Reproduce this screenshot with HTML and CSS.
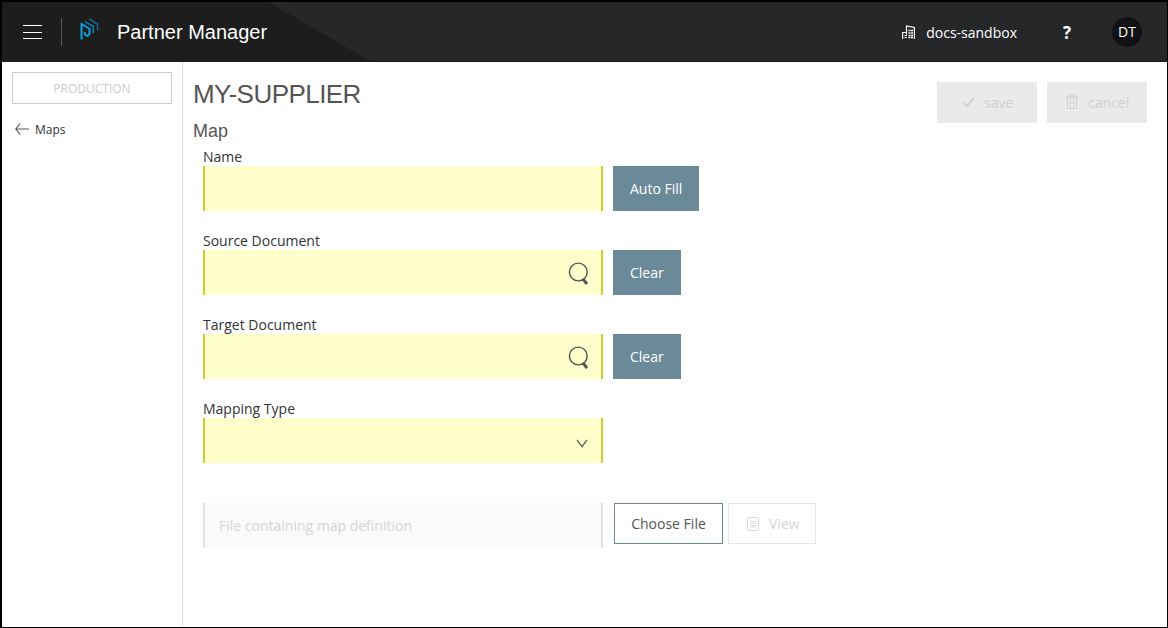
FILE: index.html
```html
<!DOCTYPE html>
<html lang="en">
<head>
<meta charset="utf-8">
<title>Partner Manager</title>
<link rel="stylesheet" href="styles.css">
</head>
<body>
<div class="app">
  <header class="topbar">
    <svg class="topbar-bg" width="370" height="60" viewBox="0 0 370 60"><path d="M0 0H266L370 60H0Z" fill="#1c1d1c"/></svg>
    <button class="menu" aria-label="Menu"><i></i><i></i><i></i></button>
    <span class="divider"></span>
    <svg class="logo" width="20" height="22" viewBox="0 0 20 22" fill="none">
      <path d="M1.500 21.500V6L9.500 10.700V15.800L7.500 18L4.800 16.300V14" stroke="#0a9fe0" stroke-width="2"/>
      <path d="M5 3.700L13.300 8.500V15" stroke="#0b7fae" stroke-width="1.500"/>
      <path d="M9 1L17.500 6V12.500" stroke="#0b6a92" stroke-width="1.500"/>
    </svg>
    <span class="app-name">Partner Manager</span>
    <div class="account">
      <svg width="13" height="15" viewBox="0 0 13 15" fill="none" stroke="#fff">
        <path d="M.6 14V7.500H4.500M4.500 9.500V1L12.400 2.500V14M2.500 10.500H5M2.500 12.500H5" stroke-width="1.200"/>
        <path d="M6.500 5.500H11M6.500 8H11M6.500 10.500H11M6.500 12.500H11" stroke-width="1.300" stroke-dasharray="2 .6"/>
      </svg>
      <span>docs-sandbox</span>
    </div>
    <span class="help">?</span>
    <span class="avatar">DT</span>
  </header>
  <div class="body">
    <nav class="sidebar">
      <div class="env">PRODUCTION</div>
      <a class="back">
        <svg width="14" height="12" viewBox="0 0 14 12" fill="none" stroke="#555" stroke-width="1.100"><path d="M.8 6H14M5 .7L.8 6L5 11.300"/></svg>
        <span>Maps</span>
      </a>
    </nav>
    <main class="content">
      <div class="heading">
        <div>
          <h1>MY-SUPPLIER</h1>
          <h2>Map</h2>
        </div>
        <div class="actions">
          <button class="action save">
            <svg width="12" height="11" viewBox="0 0 12 11" fill="none" stroke="#d0d1d2" stroke-width="2"><path d="M1 6L4.200 9L10 1.500"/></svg>
            <span>save</span>
          </button>
          <button class="action cancel">
            <svg width="12" height="15" viewBox="0 0 12 15" fill="none" stroke="#d0d1d2"><path d="M4 1.500V.5H8V1.500M.5 1.500H11.500V3.500H.5ZM1.500 3.500V13.500H10.500V3.500M4.500 5.500V11.500M7.500 5.500V11.500"/></svg>
            <span>cancel</span>
          </button>
        </div>
      </div>
      <form class="form">
        <div class="group">
          <label>Name</label>
          <div class="row"><div class="field"></div><button type="button" class="btn">Auto Fill</button></div>
        </div>
        <div class="group">
          <label>Source Document</label>
          <div class="row">
            <div class="field"><svg class="search" width="21" height="24" viewBox="0 0 21 24" fill="none" stroke="#555"><circle cx="10.300" cy="10" r="8.900" stroke-width="1.400"/><path d="M15 17L19 22" stroke-width="3"/></svg></div>
            <button type="button" class="btn">Clear</button>
          </div>
        </div>
        <div class="group">
          <label>Target Document</label>
          <div class="row">
            <div class="field"><svg class="search" width="21" height="24" viewBox="0 0 21 24" fill="none" stroke="#555"><circle cx="10.300" cy="10" r="8.900" stroke-width="1.400"/><path d="M15 17L19 22" stroke-width="3"/></svg></div>
            <button type="button" class="btn">Clear</button>
          </div>
        </div>
        <div class="group">
          <label>Mapping Type</label>
          <div class="row">
            <div class="field"><svg class="chevron" width="12" height="9" viewBox="0 0 12 9" fill="none" stroke="#555" stroke-width="1.200"><path d="M1 .8L6 7.700L11 .8"/></svg></div>
          </div>
        </div>
        <div class="row file-row">
          <div class="field disabled">File containing map definition</div>
          <button type="button" class="outline choose">Choose File</button>
          <button type="button" class="outline view">
            <svg width="12" height="14" viewBox="0 0 12 14" fill="none" stroke="#dcdcdc"><path d="M.5 .5H11.500V13.500H.5Z"/><path d="M3 4.500H9M3 6.500H9M3 8.500H9M3 10H9"/></svg>
            <span>View</span>
          </button>
        </div>
      </form>
    </main>
  </div>
</div>
</body>
</html>
```

FILE: styles.css
```css
* { box-sizing: border-box; }
body { margin: 0; font: 14px/19px "Open Sans", sans-serif; color: #333; white-space: nowrap; }
button { font: inherit; padding: 0; margin: 0; border: 0; background: none; color: inherit; }
svg { display: block; flex: none; }

.app { width: 1168px; height: 628px; border: solid #000; border-width: 2px 1px 1px 2px; background: #fff; display: flex; flex-direction: column; overflow: hidden; }

.topbar { position: relative; height: 60px; flex: none; background: #262729; display: flex; align-items: center; color: #fff; border-bottom: 1px solid #1d1a1e; padding-right: 25px; }
.topbar > * { position: relative; flex: none; }
.topbar .topbar-bg { position: absolute; left: 0; top: 0; }
.menu { width: 19px; height: 15px; margin-left: 21px; display: flex; flex-direction: column; justify-content: space-between; padding-top: 1px; }
.menu i { height: 1px; background: #fff; }
.divider { width: 1px; height: 28px; margin-left: 19px; background: #555; }
.logo { margin: 0 0 5px 18px; }
.app-name { width: 152px; margin-left: 17px; font: 20px/24px "Liberation Sans", sans-serif; }
.account { display: flex; align-items: center; gap: 11px; margin-left: auto; padding-top: 2px; }
.help { width: 12px; margin-left: 44px; padding-top: 2px; font-weight: 700; font-size: 17px; text-align: center; }
.avatar { width: 30px; height: 30px; margin-left: 39px; border-radius: 50%; background: #111214; text-align: center; line-height: 30px; }

.body { flex: 1; display: flex; min-height: 0; }
.sidebar { width: 181px; flex: none; border-right: 1px solid #ddd; padding: 10px; }
.env { height: 32px; border: 1px solid #ccc; color: #ccc; font-size: 12px; line-height: 32px; text-align: center; }
.back { display: flex; align-items: center; gap: 6px; margin-top: 16px; padding-left: 3px; font-size: 12px; }
.back svg { margin-bottom: 2px; }

.content { flex: 1; padding: 0 20px 0 10px; }
.heading { display: flex; justify-content: space-between; height: 85px; }
h1, h2 { margin: 0; font-family: "Liberation Sans", sans-serif; font-weight: 400; color: #555; }
h1 { font-size: 26px; line-height: 30px; padding-top: 17px; letter-spacing: -.55px; }
h2 { font-size: 18px; line-height: 22px; margin-top: 11px; }
.actions { display: flex; gap: 10px; padding-top: 20px; }
.action { width: 100px; height: 41px; background: #e9eaeb; color: #d0d1d2; display: flex; align-items: center; }
.save { padding-left: 26px; gap: 9px; }
.cancel { padding-left: 19px; gap: 10px; }

.form { padding-left: 10px; }
.group { margin-bottom: 20px; }
.group label { display: block; height: 19px; }
.row { display: flex; gap: 10px; }
.field { width: 400px; height: 45px; flex: none; background: #ffc; border: solid #cc3; border-width: 0 2px; display: flex; align-items: center; justify-content: flex-end; }
.search { margin: 2px 12px 0 0; }
.chevron { margin: 6px 13px 0 0; }
.btn { height: 45px; padding: 0 17px; background: #6b8a99; color: #fff; }
.file-row { gap: 0; padding-top: 20px; }
.disabled { background: #fafafa; border-color: #e3e3e3; color: #d6d6d6; justify-content: flex-start; padding-left: 14px; }
.outline { height: 41px; border: 1px solid #6b8a99; color: #555; }
.choose { width: 109px; margin-left: 11px; }
.view { width: 88px; margin-left: 5px; border-color: #e8e8e8; color: #d6d6d6; display: flex; align-items: center; gap: 10px; padding-left: 18px; }
```
